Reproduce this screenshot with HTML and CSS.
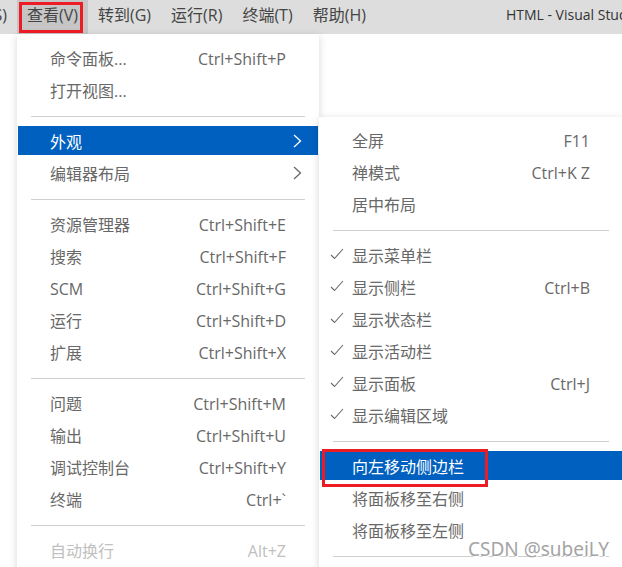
FILE: index.html
```
<!DOCTYPE html>
<html lang="zh-CN">
<head>
    <meta charset="utf-8">
    <title>HTML - Visual Studio Code</title>
    <link rel="stylesheet" href="styles.css">
</head>
<body>
    <svg class="sprite" aria-hidden="true">
        <symbol id="check" viewBox="0 0 14 12">
            <path d="M1 7L4.500 10.500L13 1" fill="none" stroke="currentColor" stroke-width="1.100"/>
        </symbol>
        <symbol id="chevron" viewBox="0 0 9 14">
            <path d="M1 1L7.500 7L1 13" fill="none" stroke="currentColor" stroke-width="1.300"/>
        </symbol>
    </svg>

    <header class="titlebar">
        <nav class="menubar">
            <div class="clipped"><button class="menubar-item">选择(S)</button></div>
            <div class="menubar-group">
                <button class="menubar-item open">查看(V)</button>
                <span class="mark mark-title"></span>

                <div class="menu">
                    <button class="item"><span class="label">命令面板...</span><span class="key">Ctrl+Shift+P</span></button>
                    <button class="item"><span class="label">打开视图...</span></button>
                    <hr>
                    <div class="item-group">
                        <button class="item selected"><span class="label">外观</span><svg class="chevron"><use href="#chevron"/></svg></button>

                        <div class="menu submenu">
                            <button class="item"><span class="label">全屏</span><span class="key">F11</span></button>
                            <button class="item"><span class="label">禅模式</span><span class="key">Ctrl+K Z</span></button>
                            <button class="item"><span class="label">居中布局</span></button>
                            <hr>
                            <button class="item"><svg class="check"><use href="#check"/></svg><span class="label">显示菜单栏</span></button>
                            <button class="item"><svg class="check"><use href="#check"/></svg><span class="label">显示侧栏</span><span class="key">Ctrl+B</span></button>
                            <button class="item"><svg class="check"><use href="#check"/></svg><span class="label">显示状态栏</span></button>
                            <button class="item"><svg class="check"><use href="#check"/></svg><span class="label">显示活动栏</span></button>
                            <button class="item"><svg class="check"><use href="#check"/></svg><span class="label">显示面板</span><span class="key">Ctrl+J</span></button>
                            <button class="item"><svg class="check"><use href="#check"/></svg><span class="label">显示编辑区域</span></button>
                            <hr>
                            <div class="item-group">
                                <button class="item selected"><span class="label">向左移动侧边栏</span></button>
                                <span class="mark mark-item"></span>
                            </div>
                            <button class="item"><span class="label">将面板移至右侧</span></button>
                            <button class="item"><span class="label">将面板移至左侧</span></button>
                            <hr>
                        </div>
                    </div>
                    <button class="item"><span class="label">编辑器布局</span><svg class="chevron"><use href="#chevron"/></svg></button>
                    <hr>
                    <button class="item"><span class="label">资源管理器</span><span class="key">Ctrl+Shift+E</span></button>
                    <button class="item"><span class="label">搜索</span><span class="key">Ctrl+Shift+F</span></button>
                    <button class="item"><span class="label">SCM</span><span class="key">Ctrl+Shift+G</span></button>
                    <button class="item"><span class="label">运行</span><span class="key">Ctrl+Shift+D</span></button>
                    <button class="item"><span class="label">扩展</span><span class="key">Ctrl+Shift+X</span></button>
                    <hr>
                    <button class="item"><span class="label">问题</span><span class="key">Ctrl+Shift+M</span></button>
                    <button class="item"><span class="label">输出</span><span class="key">Ctrl+Shift+U</span></button>
                    <button class="item"><span class="label">调试控制台</span><span class="key">Ctrl+Shift+Y</span></button>
                    <button class="item"><span class="label">终端</span><span class="key">Ctrl+`</span></button>
                    <hr>
                    <button class="item" disabled><span class="label">自动换行</span><span class="key">Alt+Z</span></button>
                </div>
            </div>
            <button class="menubar-item">转到(G)</button>
            <button class="menubar-item">运行(R)</button>
            <button class="menubar-item">终端(T)</button>
            <button class="menubar-item">帮助(H)</button>
        </nav>
        <span class="window-title">HTML - Visual Studio Code</span>
    </header>

    <div class="watermark">CSDN @subeiLY</div>
</body>
</html>
```

FILE: styles.css
```
* {
    box-sizing: border-box;
}

body {
    margin: 0;
    height: 100vh;
    overflow: hidden;
    background-color: #ffffff;
    color: #616161;
    font-family: "Open Sans", "Noto Sans CJK SC", sans-serif;
    font-size: 16px;
}

button {
    margin: 0;
    border: 0;
    background: none;
    color: inherit;
    font: inherit;
    white-space: nowrap;
}

.sprite {
    display: none;
}

.titlebar {
    display: flex;
    height: 34px;
    background-color: #dddddd;
    color: #333333;
}

.menubar {
    display: flex;
    flex: none;
}

.menubar-item {
    height: 34px;
    padding: 0 10px 6px;
    color: #444444;
    font-size: 16px;
}

.menubar-item.open {
    background-color: #c6c6c6;
}

/* first entry is scrolled off the left edge */
.clipped {
    display: flex;
    justify-content: flex-end;
    width: 17px;
    overflow: hidden;
}

.menubar-group,
.item-group {
    position: relative;
    display: flex;
}

.window-title {
    flex: 1;
    min-width: 0;
    margin-left: 130px;
    overflow: hidden;
    font-size: 14px;
    line-height: 30px;
    white-space: nowrap;
}

.menu {
    position: absolute;
    top: 34px;
    left: 0;
    z-index: 1;
    display: flex;
    flex-direction: column;
    gap: 3px;
    min-width: 302px;
    padding: 9px 1px;
    background-color: #ffffff;
    box-shadow: 0 2px 8px rgba(0, 0, 0, 0.16);
    color: #686868;
}

.submenu {
    top: -9px;
    left: calc(100% + 1px);
    min-width: 304px;
    padding-top: 8px;
}

.menu hr {
    width: auto;
    height: 1px;
    margin: 9px 13px 6px;
    border: 0;
    background-color: #cfcfcf;
}

.item {
    position: relative;
    display: flex;
    flex: 1;
    align-items: center;
    justify-content: space-between;
    height: 29px;
    padding: 3px 32px 0;
    line-height: 25px;
}

.menu > .item {
    flex: none;
}

.item.selected {
    background-color: #0060c0;
    color: #ffffff;
}

.item:disabled {
    color: #c0c0c0;
}

.check {
    position: absolute;
    top: 8px;
    left: 10px;
    width: 14px;
    height: 12px;
}

.chevron {
    width: 9px;
    height: 14px;
    margin-right: -16px;
    margin-bottom: 3px;
}

/* red frames drawn over the menu */
.mark {
    position: absolute;
    z-index: 2;
    border: 3px solid #ed1c24;
    pointer-events: none;
}

.mark-title {
    top: 2px;
    left: 2px;
    width: 64px;
    height: 31px;
}

.mark-item {
    top: -2px;
    left: 2px;
    width: 166px;
    height: 38px;
}

.watermark {
    position: absolute;
    right: 13px;
    bottom: 5px;
    z-index: 3;
    color: #a4a4a4;
    font-family: "Noto Sans", sans-serif;
    font-size: 19px;
    line-height: 26px;
    text-shadow: 1px 1px 0 #ffffff;
}
```
